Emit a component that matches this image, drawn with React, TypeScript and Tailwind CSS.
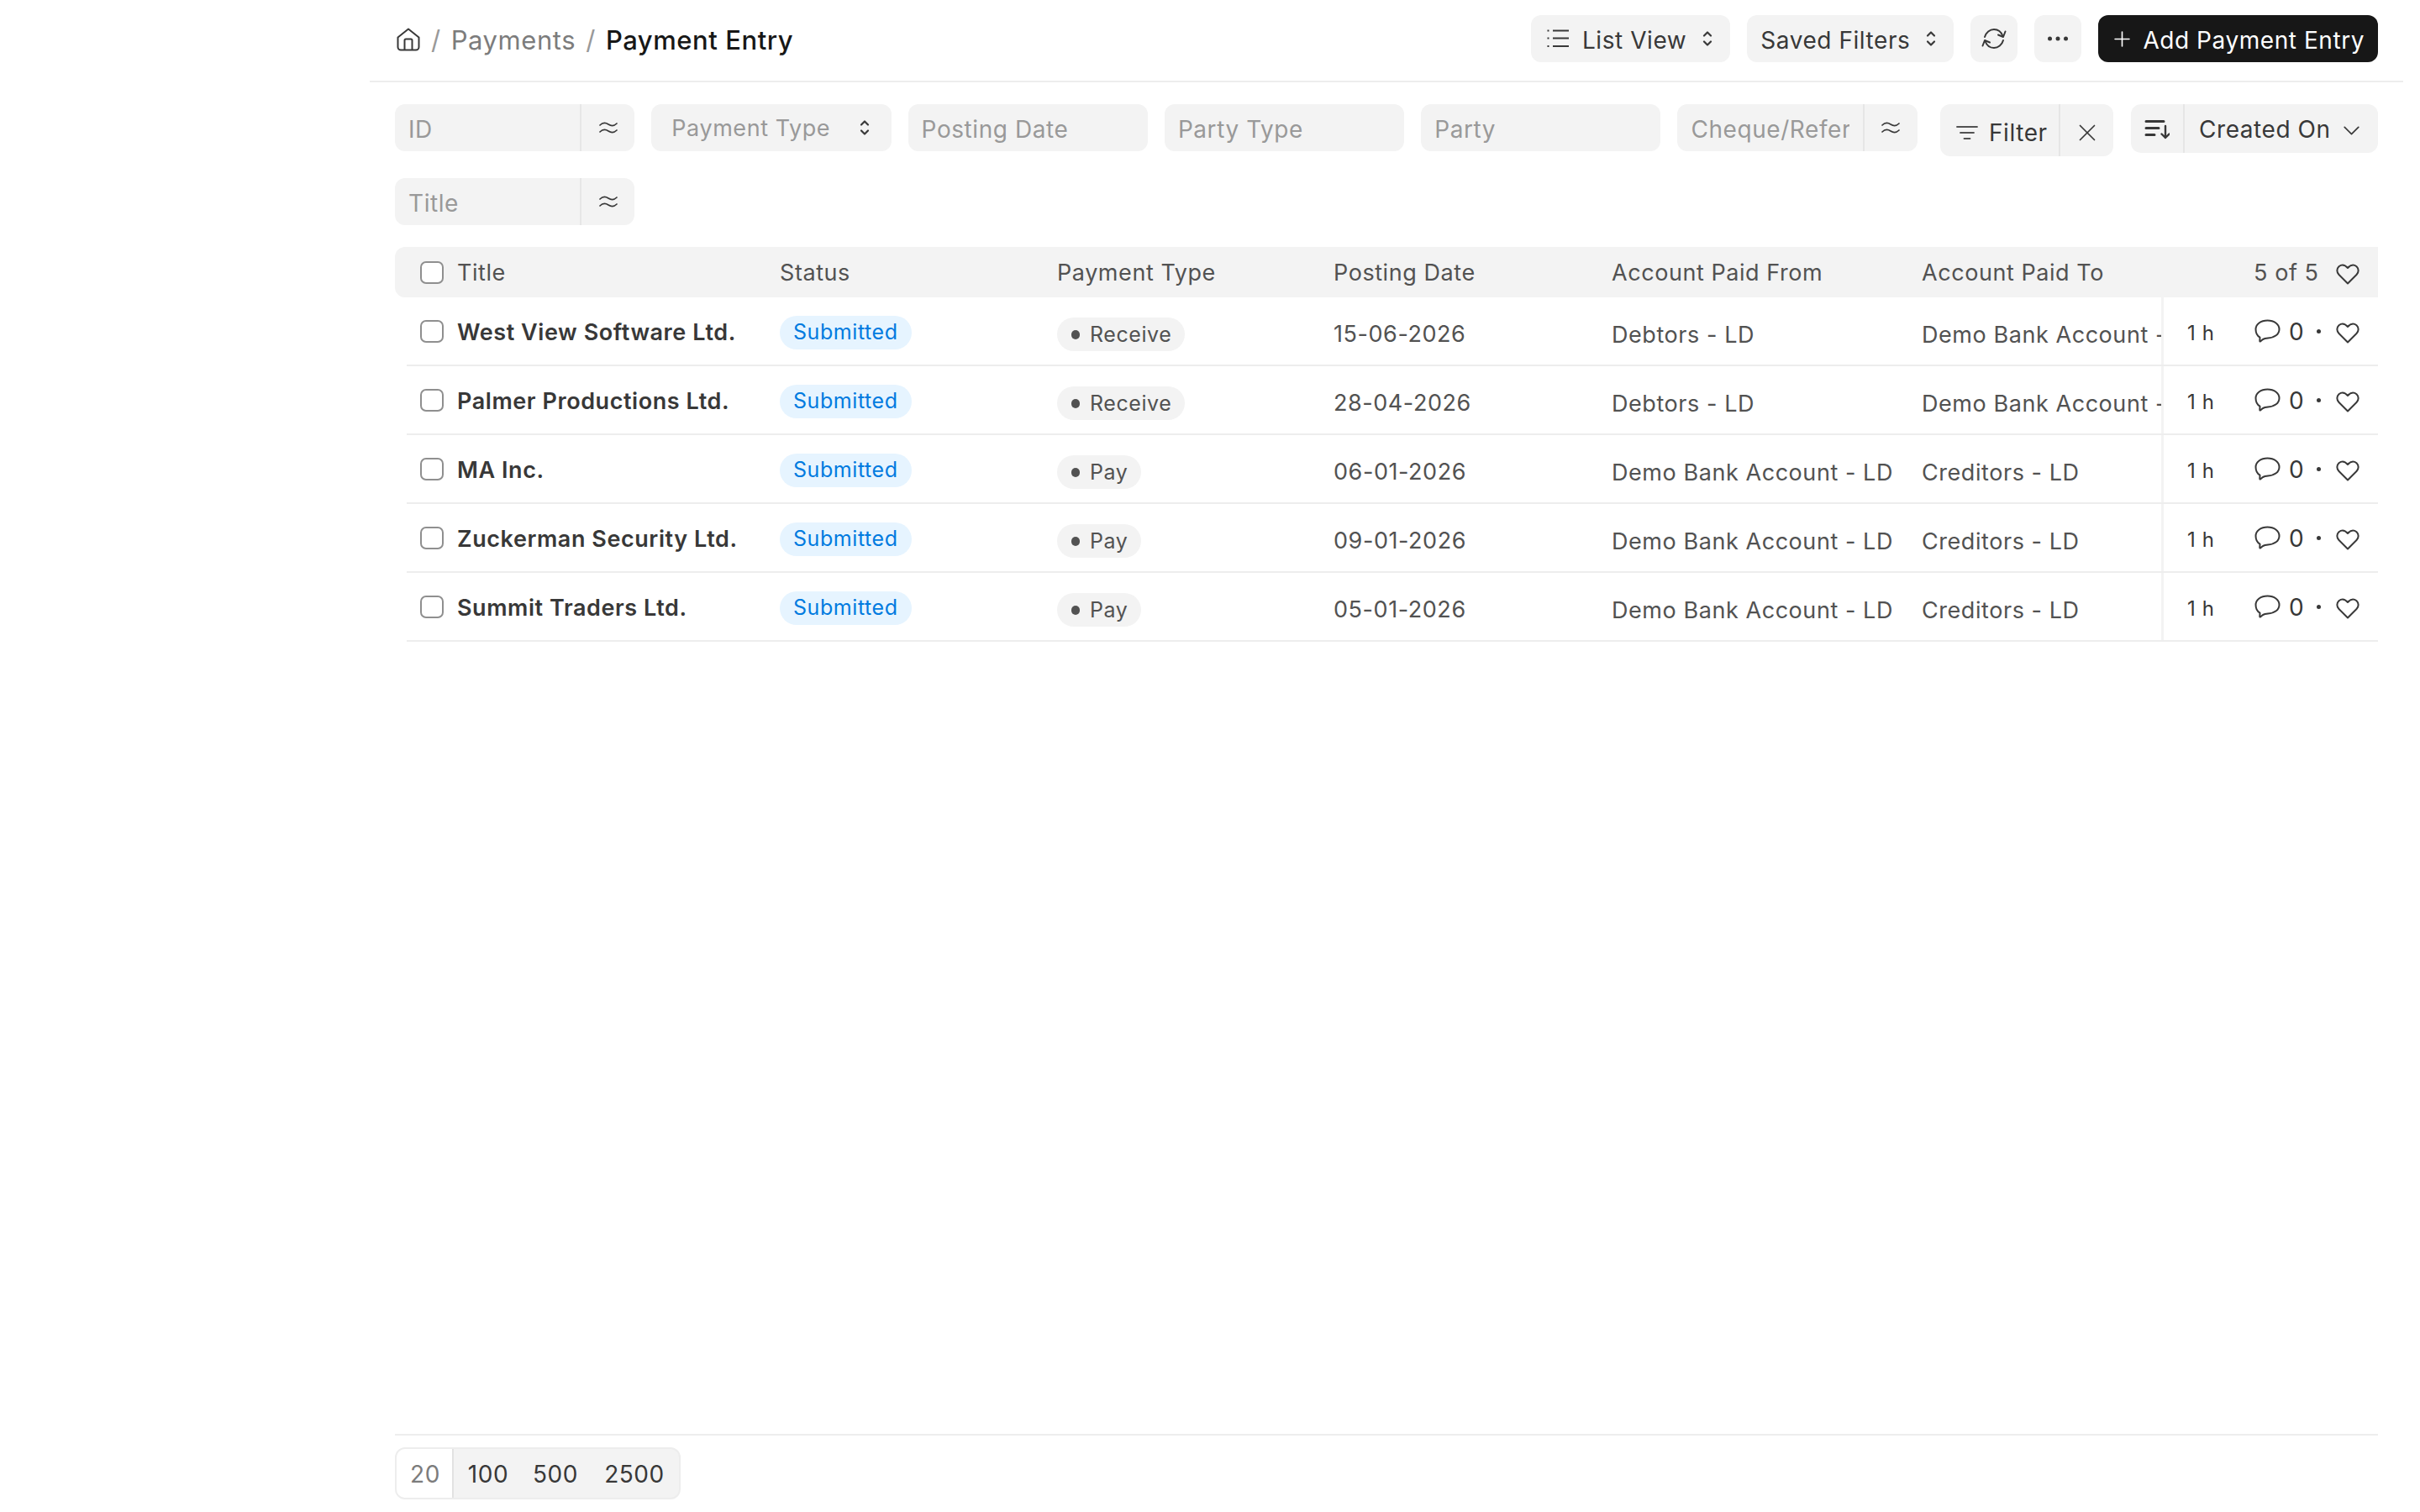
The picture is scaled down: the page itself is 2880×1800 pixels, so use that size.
import type { FC } from "react";
import { ChevronDown, Plus, X } from "lucide-react";

type Row = {
  title: string;
  type: string;
  date: string;
  from: string;
  to: string;
};

const rows: Row[] = [
  { title: "West View Software Ltd.", type: "Receive", date: "15-06-2026", from: "Debtors - LD", to: "Demo Bank Account - LD" },
  { title: "Palmer Productions Ltd.", type: "Receive", date: "28-04-2026", from: "Debtors - LD", to: "Demo Bank Account - LD" },
  { title: "MA Inc.", type: "Pay", date: "06-01-2026", from: "Demo Bank Account - LD", to: "Creditors - LD" },
  { title: "Zuckerman Security Ltd.", type: "Pay", date: "09-01-2026", from: "Demo Bank Account - LD", to: "Creditors - LD" },
  { title: "Summit Traders Ltd.", type: "Pay", date: "05-01-2026", from: "Demo Bank Account - LD", to: "Creditors - LD" },
];

const HomeIcon = () => (
  <svg width="28" height="28" viewBox="0 0 28 28" fill="none" stroke="#383838" strokeWidth="2" strokeLinejoin="round">
    <path d="M1.5 11.5 14 1.5l12.5 10V23a3.5 3.5 0 0 1-3.5 3.5H5A3.5 3.5 0 0 1 1.5 23V11.5Z" />
    <path d="M9.5 26.5V15a1.5 1.5 0 0 1 1.5-1.5h6a1.5 1.5 0 0 1 1.5 1.5v11.5" />
  </svg>
);

const ListIcon = () => (
  <svg width="28" height="24" viewBox="0 0 28 24" fill="none" stroke="#383838" strokeWidth="2">
    <path d="M7 2.5h19M7 11.5h19M7 21h19" />
    <path d="M.5 2.5h2M.5 11.5h2M.5 21h2" />
  </svg>
);

const UpDown = () => (
  <svg width="12" height="20" viewBox="0 0 12 20" fill="none" stroke="#383838" strokeWidth="2.2" strokeLinecap="round" strokeLinejoin="round" className="shrink-0">
    <path d="M2 6.5 6 2.5l4 4M2 13.5l4 4 4-4" />
  </svg>
);

const RefreshIcon = () => (
  <svg width="30" height="26" viewBox="0 0 30 26" fill="none" stroke="#383838" strokeWidth="2" strokeLinecap="round" strokeLinejoin="round">
    <path d="M4 11C5.5 5.5 10 2 15 2c4.5 0 8.5 2.5 10.5 8" />
    <path d="M28.5 4.5 26 11l-6-2.5" />
    <path d="M26 15c-1.5 5.5-6 9-11 9-4.5 0-8.5-2.5-10.5-8" />
    <path d="M1.5 21.5 4 15l6 2.5" />
  </svg>
);

const DotsIcon = () => (
  <svg width="28" height="8" viewBox="0 0 28 8" fill="#383838">
    <circle cx="4.5" cy="4" r="2.5" />
    <circle cx="14" cy="4" r="2.5" />
    <circle cx="23.5" cy="4" r="2.5" />
  </svg>
);

const ApproxIcon = () => (
  <svg width="22" height="16" viewBox="0 0 22 16" fill="none" stroke="#383838" strokeWidth="1.7" strokeLinecap="round">
    <path d="M1 5c3-3 7-3 10-1s7 2 10-1" />
    <path d="M1 13c3-3 7-3 10-1s7 2 10-1" />
  </svg>
);

const FilterLines = () => (
  <svg width="26" height="18" viewBox="0 0 26 18" fill="none" stroke="#525252" strokeWidth="1.8" strokeLinecap="round" className="shrink-0">
    <path d="M1 2h24M5 9h16M9.5 16h7" />
  </svg>
);

const SortIcon = () => (
  <svg width="30" height="24" viewBox="0 0 30 24" fill="none" stroke="#383838" strokeWidth="3" strokeLinecap="round" strokeLinejoin="round">
    <path d="M2 2.5h21M2 10.5h15M2 18.5h10" />
    <path d="M25 8v14M20.5 17.5 25 22l4.500-4.500" strokeWidth="2.4" />
  </svg>
);

const HeartIcon = () => (
  <svg width="28" height="25" viewBox="0 0 28 25" fill="none" stroke="#383838" strokeWidth="2" strokeLinejoin="round" className="shrink-0">
    <path d="M14 23.500 3.500 13C.5 10 .8 5.800 3.500 3.200 6.500.8 10.500 1 14 5c3.500-4 7.500-4.200 10.500-1.800 2.700 2.600 3 6.800 0 9.800L14 23.500Z" />
  </svg>
);

const CommentIcon = () => (
  <svg width="31" height="28" viewBox="0 0 31 28" fill="none" stroke="#383838" strokeWidth="2" strokeLinejoin="round" className="shrink-0">
    <path d="M15.500 1.500c8 0 14 4.500 14 10.500s-5.500 10-13.500 10.500c-2 .2-4 .4-6 1.500l-3 2.500c-.3.2-.7 0-.7-.4l.2-4.500C3.500 20 1.500 16 1.500 12c0-6 6-10.500 14-10.500Z" />
  </svg>
);

const Checkbox = () => <span className="block h-[27px] w-[28px] shrink-0 rounded-[7px] border-2 border-[#8f8f8f] bg-white" />;

const HeaderButton: FC<{ label: string; list?: boolean }> = ({ label, list }) => (
  <div className={`flex h-14 items-center rounded-xl bg-[#f3f3f3] pr-[21px] text-[#383838] ${list ? "pl-[19px]" : "pl-4"}`}>
    {list && (
      <span className="mr-[14px]">
        <ListIcon />
      </span>
    )}
    <span className="pt-[3px]">{label}</span>
    <span className="ml-[19px]">
      <UpDown />
    </span>
  </div>
);

const TextFilter: FC<{ label: string; approx?: boolean }> = ({ label, approx }) => (
  <div className="flex h-14 w-[285.3px] items-center overflow-hidden rounded-xl bg-[#f3f3f3] text-[#999999]">
    <span className="ml-4 mr-4 min-w-0 flex-1 overflow-hidden whitespace-nowrap pb-[2px] pt-[5px]">{label}</span>
    {approx && (
      <span className="flex h-14 w-[65px] shrink-0 items-center justify-center border-l-2 border-[#e6e6e6]">
        <ApproxIcon />
      </span>
    )}
  </div>
);

const TableRow: FC<{ row: Row }> = ({ row }) => (
  <div className="ml-[14px] flex h-[82px] items-stretch border-b-2 border-[#ededed] text-[27px] text-[#525252]">
    <div className="flex w-[444px] shrink-0 items-center gap-4 pl-4">
      <Checkbox />
      <span className="pt-[2px] font-semibold text-[#383838]">{row.title}</span>
    </div>
    <div className="flex w-[330px] shrink-0 items-center pt-[3px]">
      <span className="flex h-10 items-center rounded-full bg-[#e6f4ff] px-4 text-[25px] text-[#007be0]">Submitted</span>
    </div>
    <div className="flex w-[329px] shrink-0 items-center pt-[8px]">
      <span className="flex h-10 items-center gap-3 rounded-full bg-[#f3f3f3] pl-[17px] pr-4 text-[25px] text-[#525252]">
        <span className="h-[11px] w-[10px] rounded-full bg-[#525252]" />
        {row.type}
      </span>
    </div>
    <div className="flex w-[331px] shrink-0 items-center pt-[7px]">{row.date}</div>
    <div className="flex w-[369px] shrink-0 items-center pt-[8px]">{row.from}</div>
    <div className="flex w-[285px] shrink-0 items-center overflow-hidden whitespace-nowrap pt-[8px]">{row.to}</div>
    <div className="flex flex-1 items-center border-l-[3px] border-[#f3f3f3] pl-[28px] text-[#383838]">
      <span className="w-[80px] pt-[6px] text-[24px]">1 h</span>
      <CommentIcon />
      <span className="ml-[10px] w-[18px] pt-[2px] text-[28px]">0</span>
      <span className="ml-[15px] h-[5px] w-[5px] rounded-full bg-[#383838]" />
      <span className="ml-[18px] pt-[4px]">
        <HeartIcon />
      </span>
    </div>
  </div>
);

export default function App() {
  return (
    <div className="flex h-screen w-full bg-white font-[Inter,sans-serif] text-[28px] leading-none tracking-[0.02em]">
      <aside className="w-[440px] shrink-0" />
      <main className="mr-5 flex min-w-0 flex-1 flex-col">
        <header className="flex h-[98px] shrink-0 items-center justify-between border-b-2 border-[#ededed] pb-[4px] pl-[30px] pr-[30px]">
          <div className="flex items-center gap-3 text-[31px]">
            <span className="ml-[2px] mr-[1px] pt-[2px]">
              <HomeIcon />
            </span>
            <span className="pt-[2px] text-[#999999]">/</span>
            <span className="pt-[2px] text-[#7c7c7c]">Payments</span>
            <span className="pt-[2px] text-[#999999]">/</span>
            <span className="pt-[2px] font-medium text-[#171717]">Payment Entry</span>
          </div>
          <div className="flex items-center gap-5">
            <HeaderButton label="List View" list />
            <HeaderButton label="Saved Filters" />
            <div className="flex h-14 w-14 items-center justify-center rounded-xl bg-[#f3f3f3]">
              <RefreshIcon />
            </div>
            <div className="flex h-14 w-14 items-center justify-center rounded-xl bg-[#f3f3f3]">
              <DotsIcon />
            </div>
            <div className="flex h-14 items-center gap-[10px] rounded-xl bg-[#171717] pl-[14px] pr-4 text-white">
              <Plus size={29} strokeWidth={1.35} />
              <span className="pt-[3px]">Add Payment Entry</span>
            </div>
          </div>
        </header>

        <div className="flex items-start justify-between pl-[30px] pr-[30px] pt-[26px]">
          <div className="flex w-[1836px] flex-wrap gap-x-5 gap-y-8">
            <TextFilter label="ID" approx />
            <div className="flex h-14 w-[285.3px] items-center justify-between rounded-xl bg-[#f3f3f3] pl-6 pr-[26px] text-[27px] text-[#999999]">
              <span>Payment Type</span>
              <UpDown />
            </div>
            <TextFilter label="Posting Date" />
            <TextFilter label="Party Type" />
            <TextFilter label="Party" />
            <TextFilter label="Cheque/Reference No" approx />
            <TextFilter label="Title" approx />
          </div>
          <div className="flex items-start gap-[21px]">
            <div className="flex h-[62px] w-[206px] items-center rounded-xl bg-[#f3f3f3] text-[#383838]">
              <div className="flex h-full w-[143px] items-center gap-[13px] border-r-2 border-[#e6e6e6] pl-[19px] pt-[6px]">
                <FilterLines />
                <span>Filter</span>
              </div>
              <div className="flex flex-1 items-center justify-center pt-[6px]">
                <X size={34} strokeWidth={1.2} />
              </div>
            </div>
            <div className="flex h-[58px] w-[294px] items-center rounded-xl bg-[#f3f3f3] text-[#383838]">
              <div className="flex h-full w-[64px] items-center justify-center border-r-2 border-[#e6e6e6] pt-[2px]">
                <SortIcon />
              </div>
              <span className="pl-[17px] pt-[2px]">Created On</span>
              <ChevronDown size={33} strokeWidth={1.2} className="ml-[8px] mt-[4px]" />
            </div>
          </div>
        </div>

        <section className="ml-[30px] mr-[30px] mt-[26px] flex-1">
          <div className="flex h-[60px] items-center rounded-l-xl bg-[#f3f3f3] text-[27px] text-[#525252]">
            <div className="flex w-[458px] shrink-0 items-center gap-4 pl-[30px]">
              <Checkbox />
              <span>Title</span>
            </div>
            <span className="w-[330px] shrink-0">Status</span>
            <span className="w-[329px] shrink-0">Payment Type</span>
            <span className="w-[331px] shrink-0">Posting Date</span>
            <span className="w-[369px] shrink-0">Account Paid From</span>
            <span className="w-[395px] shrink-0">Account Paid To</span>
            <span className="w-[98px] shrink-0">5 of 5</span>
            <span className="pt-[5px]">
              <HeartIcon />
            </span>
          </div>
          {rows.map((row) => (
            <TableRow key={row.title} row={row} />
          ))}
        </section>

        <footer className="ml-[30px] mr-[30px] shrink-0 border-t-2 border-[#ededed] pb-[15px] pt-[14px]">
          <div className="flex h-[62px] w-[340px] overflow-hidden rounded-xl border-2 border-[#ededed] bg-[#f3f3f3] text-[#383838]">
            <span className="flex w-[68px] items-center justify-center border-r-2 border-[#e2e2e2] bg-white pl-[2px] pt-[2px] text-[#7c7c7c]">20</span>
            <span className="flex w-[80px] items-center justify-center pl-[2px] pt-[2px]">100</span>
            <span className="flex w-[80px] items-center justify-center pl-[2px] pt-[2px]">500</span>
            <span className="flex flex-1 items-center justify-center pl-[2px] pt-[2px]">2500</span>
          </div>
        </footer>
      </main>
    </div>
  );
}
